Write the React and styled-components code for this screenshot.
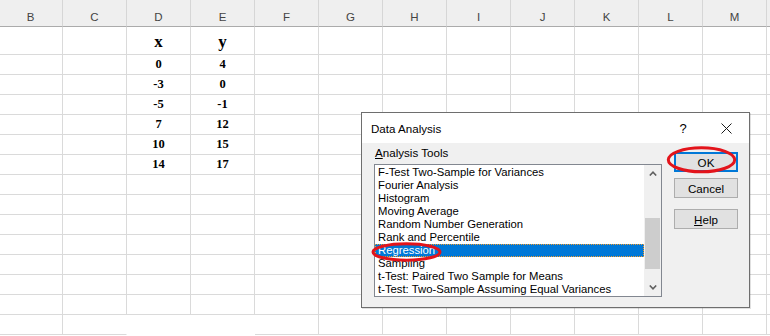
import React from 'react';
import styled, { createGlobalStyle } from 'styled-components';

// last column only peeks in at the right edge, so it carries no label
const COLUMNS = ['B', 'C', 'D', 'E', 'F', 'G', 'H', 'I', 'J', 'K', 'L', 'M', ''];
const DATA = [
  ['0', '4'],
  ['-3', '0'],
  ['-5', '-1'],
  ['7', '12'],
  ['10', '15'],
  ['14', '17'],
];
const EMPTY_ROWS = 8;

const TOOLS = [
  'F-Test Two-Sample for Variances',
  'Fourier Analysis',
  'Histogram',
  'Moving Average',
  'Random Number Generation',
  'Rank and Percentile',
  'Regression',
  'Sampling',
  't-Test: Paired Two Sample for Means',
  't-Test: Two-Sample Assuming Equal Variances',
];
const SELECTED = 'Regression';

const GlobalStyle = createGlobalStyle`
  html, body {
    margin: 0;
    padding: 0;
    background: #ffffff;
    overflow: hidden;
  }
  * {
    box-sizing: border-box;
  }
`;

const App = () => {
  const rows = [
    { key: 'head', tall: true, values: ['x', 'y'] },
    ...DATA.map((values, i) => ({ key: `d${i}`, values })),
    ...Array.from({ length: EMPTY_ROWS }, (_, i) => ({
      key: `e${i}`,
      values: null,
      last: i === EMPTY_ROWS - 1,
    })),
  ];

  return (
    <Sheet>
      <GlobalStyle />
      <HeaderRow>
        {COLUMNS.map((c, i) => (
          <HeaderCell key={i}>{c}</HeaderCell>
        ))}
      </HeaderRow>

      {rows.map((row) => (
        <Row key={row.key}>
          {COLUMNS.map((c, ci) => {
            const idx = c === 'D' ? 0 : c === 'E' ? 1 : -1;
            const inTable = idx >= 0;
            return (
              <Cell
                key={ci}
                $tall={row.tall}
                $blank={row.last && inTable}
                $noRight={row.last && c === 'C'}
              >
                {inTable && row.values ? row.values[idx] : ''}
              </Cell>
            );
          })}
        </Row>
      ))}

      <Dialog>
        <TitleBar>
          <Title>Data Analysis</Title>
          <TitleButton>?</TitleButton>
          <TitleButton $close>
            <svg width="11" height="11" viewBox="0 0 11 11">
              <path d="M0.5 0.5 L10.5 10.5 M10.5 0.5 L0.5 10.5" stroke="#1a1a1a" strokeWidth="1" fill="none" />
            </svg>
          </TitleButton>
        </TitleBar>

        <Body>
          <LeftColumn>
            <Label>
              <u>A</u>nalysis Tools
            </Label>
            <ListBox>
              <Items>
                {TOOLS.map((t) => (
                  <Item key={t} $selected={t === SELECTED}>
                    {t}
                  </Item>
                ))}
              </Items>
              <ScrollBar>
                <Arrow>
                  <svg width="8" height="5" viewBox="0 0 8 5">
                    <path d="M0.8 4.5 L4 1.2 L7.2 4.5" stroke="#606060" strokeWidth="1.6" fill="none" />
                  </svg>
                </Arrow>
                <Track>
                  <Thumb />
                </Track>
                <Arrow>
                  <svg width="8" height="5" viewBox="0 0 8 5">
                    <path d="M0.8 0.5 L4 3.8 L7.2 0.5" stroke="#606060" strokeWidth="1.6" fill="none" />
                  </svg>
                </Arrow>
              </ScrollBar>
            </ListBox>
          </LeftColumn>

          <ButtonColumn>
            <Button $primary>OK</Button>
            <Button>Cancel</Button>
            <Button $spaced>
              <u>H</u>elp
            </Button>
          </ButtonColumn>
        </Body>
      </Dialog>

      <Marks width="770" height="336" viewBox="0 0 770 336">
        <ellipse cx="406.5" cy="252" rx="33.5" ry="8.2" fill="none" stroke="#e3141b" strokeWidth="3" />
        <ellipse cx="701.5" cy="159.8" rx="33.2" ry="12" fill="none" stroke="#e3141b" strokeWidth="3" />
      </Marks>
    </Sheet>
  );
};

const Sheet = styled.div`
  position: relative;
  width: 770px;
  height: 336px;
  overflow: hidden;
  background: #ffffff;
`;

const HeaderRow = styled.div`
  display: flex;
  margin-left: -1px;
  height: 27px;
  width: max-content;
`;

const HeaderCell = styled.div`
  flex: none;
  width: 64px;
  height: 27px;
  padding-top: 11px;
  background: #efefef;
  border-right: 1px solid #d6d6d6;
  border-bottom: 1px solid #ababab;
  text-align: center;
  font-family: 'Liberation Sans', Arial, sans-serif;
  font-size: 11.5px;
  line-height: 12px;
  color: #444444;
`;

const Row = styled.div`
  display: flex;
  margin-left: -1px;
  width: max-content;
`;

const Cell = styled.div`
  flex: none;
  width: 64px;
  height: ${(p) => (p.$tall ? 28 : 20)}px;
  display: flex;
  align-items: flex-end;
  justify-content: center;
  padding-bottom: ${(p) => (p.$tall ? 4 : 3)}px;
  border-right: 1px solid ${(p) => (p.$blank || p.$noRight ? '#ffffff' : '#dadada')};
  border-bottom: 1px solid ${(p) => (p.$blank ? '#ffffff' : '#dadada')};
  font-family: 'Liberation Serif', 'Times New Roman', serif;
  font-weight: bold;
  font-size: ${(p) => (p.$tall ? 17 : 12.5)}px;
  line-height: ${(p) => (p.$tall ? 16 : 13)}px;
  color: #000000;
`;

const Dialog = styled.div`
  position: absolute;
  left: 361px;
  top: 112px;
  width: 389px;
  height: 196px;
  display: flex;
  flex-direction: column;
  background: #f0f0f0;
  border: 1px solid #6e6e6e;
  box-shadow: 1px 1px 0 rgba(0, 0, 0, 0.12);
  font-family: 'Liberation Sans', Arial, sans-serif;
  font-size: 11.3px;
  color: #000000;
`;

const TitleBar = styled.div`
  display: flex;
  align-items: center;
  height: 30px;
  padding-left: 9px;
  background: #ffffff;
`;

const Title = styled.div`
  flex: 1;
  font-size: 11.6px;
  padding-top: 1px;
`;

const TitleButton = styled.div`
  width: ${(p) => (p.$close ? 46 : 40)}px;
  display: flex;
  justify-content: center;
  align-items: center;
  font-size: 13px;
  padding-top: 1px;
`;

const Body = styled.div`
  flex: 1;
  display: flex;
  padding: 0 10px 0 12px;
  gap: 12px;
`;

const LeftColumn = styled.div`
  display: flex;
  flex-direction: column;
  padding-top: 3px;
`;

const Label = styled.div`
  height: 14px;
  line-height: 14px;
  margin-bottom: 4px;
  padding-left: 1px;
  font-size: 11.6px;
`;

const ListBox = styled.div`
  display: flex;
  width: 288px;
  height: 133px;
  background: #ffffff;
  border: 1px solid #828790;
`;

const Items = styled.div`
  flex: 1;
  padding-top: 1px;
`;

const Item = styled.div`
  height: 13px;
  line-height: 13px;
  padding-left: 3px;
  white-space: nowrap;
  overflow: hidden;
  background: ${(p) => (p.$selected ? '#0078d7' : 'transparent')};
  color: ${(p) => (p.$selected ? '#ffffff' : '#000000')};
  outline: ${(p) => (p.$selected ? '1px dotted #f39c2c' : 'none')};
  outline-offset: -1px;
`;

const ScrollBar = styled.div`
  width: 17px;
  display: flex;
  flex-direction: column;
  background: #f0f0f0;
`;

const Arrow = styled.div`
  height: 17px;
  display: flex;
  align-items: center;
  justify-content: center;
`;

const Track = styled.div`
  flex: 1;
  padding: 36px 1px 0 1px;
`;

const Thumb = styled.div`
  height: 51px;
  background: #cdcdcd;
`;

const ButtonColumn = styled.div`
  display: flex;
  flex-direction: column;
  gap: 6px;
  padding-top: 9px;
`;

const Button = styled.div`
  width: 64px;
  height: 20px;
  display: flex;
  align-items: center;
  justify-content: center;
  background: #e1e1e1;
  border: ${(p) => (p.$primary ? '2px solid #0078d7' : '1px solid #adadad')};
  margin-top: ${(p) => (p.$spaced ? 5 : 0)}px;
  font-size: 11.6px;
`;

const Marks = styled.svg`
  position: absolute;
  left: 0;
  top: 0;
  pointer-events: none;
`;

export default App;
